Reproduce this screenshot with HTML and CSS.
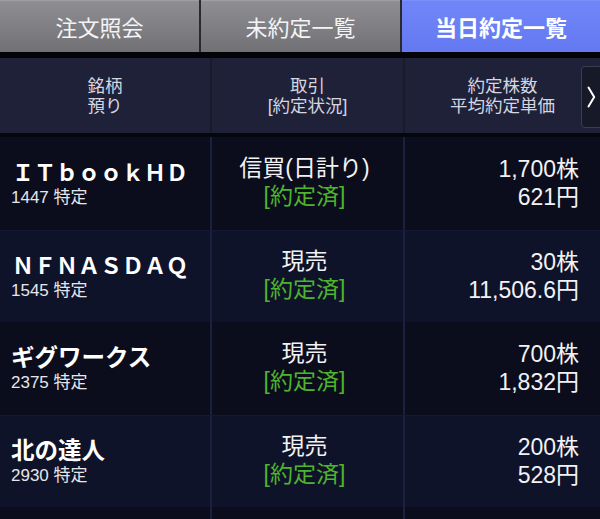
FILE: index.html
```html
<!DOCTYPE html>
<html lang="ja">
<head>
<meta charset="utf-8">
<link rel="stylesheet" href="styles.css">
</head>
<body>
<div class="screen">
  <nav class="tabs">
    <div class="tab">注文照会</div>
    <div class="tab">未約定一覧</div>
    <div class="tab active">当日約定一覧</div>
  </nav>
  <div class="thead">
    <div class="hcell c1">銘柄<br>預り</div>
    <div class="hcell c2">取引<br>[約定状況]</div>
    <div class="hcell c3">約定株数<br>平均約定単価</div>
    <div class="more"><svg width="9" height="22" viewBox="0 0 9 22"><path d="M1.5 1.5 L7.2 11 L1.5 20.5" fill="none" stroke="#fff" stroke-width="2" stroke-linecap="round" stroke-linejoin="round"/></svg></div>
  </div>
  <div class="rows">
    <div class="row">
      <div class="cell c1"><div class="name wide">ＩＴｂｏｏｋＨＤ</div><div class="code">1447 特定</div></div>
      <div class="cell c2"><div>信買(日計り)</div><div class="done">[約定済]</div></div>
      <div class="cell c3"><div>1,700株</div><div>621円</div></div>
    </div>
    <div class="row alt">
      <div class="cell c1"><div class="name wide">ＮＦＮＡＳＤＡＱ</div><div class="code">1545 特定</div></div>
      <div class="cell c2"><div>現売</div><div class="done">[約定済]</div></div>
      <div class="cell c3"><div>30株</div><div>11,506.6円</div></div>
    </div>
    <div class="row">
      <div class="cell c1"><div class="name">ギグワークス</div><div class="code">2375 特定</div></div>
      <div class="cell c2"><div>現売</div><div class="done">[約定済]</div></div>
      <div class="cell c3"><div>700株</div><div>1,832円</div></div>
    </div>
    <div class="row alt">
      <div class="cell c1"><div class="name">北の達人</div><div class="code">2930 特定</div></div>
      <div class="cell c2"><div>現売</div><div class="done">[約定済]</div></div>
      <div class="cell c3"><div>200株</div><div>528円</div></div>
    </div>
    <div class="row last">
      <div class="cell c1"></div>
      <div class="cell c2"></div>
      <div class="cell c3"></div>
    </div>
  </div>
</div>
</body>
</html>
```
FILE: styles.css
```css
* { box-sizing: border-box; }
html, body { margin: 0; padding: 0; }
body {
  background: #05060c;
  font-family: "Liberation Sans", "Noto Sans CJK JP", sans-serif;
  color: #f2f2f4;
  width: 600px;
  height: 519px;
  overflow: hidden;
}
.screen { width: 600px; height: 519px; overflow: hidden; }
.tabs {
  display: flex;
  height: 58px;
  border-bottom: 6px solid #040408;
  background: #2a2a2e;
}
.tab {
  flex: 0 0 199px;
  height: 52px;
  display: flex;
  align-items: center;
  justify-content: center;
  font-size: 22px;
  color: #f4f4f6;
  background: linear-gradient(#8f8f93, #717175);
  border-top: 1px solid #a0a0a4;
  margin-right: 2px;
  padding-bottom: 1px;
}
.tab.active {
  flex: 1 1 auto;
  margin-right: 0;
  background: linear-gradient(#7086f8, #6479f1);
  border-top-color: #7c90fa;
  color: #ffffff;
  font-weight: bold;
}
.thead {
  position: relative;
  display: flex;
  height: 79px;
  background: #1f2139;
  border-bottom: 4px solid #06070e;
}
.hcell {
  display: flex;
  align-items: center;
  justify-content: center;
  text-align: center;
  font-size: 17.5px;
  line-height: 20px;
  color: #d4d6e0;
  padding-top: 1px;
}
.c1 { flex: 0 0 212px; border-right: 2px solid #181a2e; }
.c2 { flex: 0 0 193px; border-right: 2px solid #181a2e; }
.c3 { flex: 1 1 auto; }
.more {
  position: absolute;
  right: -4px;
  top: 8px;
  width: 23px;
  height: 62px;
  background: #171929;
  border: 1px solid #3a3d52;
  border-radius: 4px;
  display: flex;
  align-items: center;
  padding-left: 5px;
}
.rows { display: flex; flex-direction: column; }
.row {
  display: flex;
  height: 92.5px;
  background: #0b0d1c;
  flex-shrink: 0;
}
.row.alt { background: #0f1329; border-top: 1px solid #141833; }
.row.last { height: 12px; }
.row .c1, .row .c2 { border-right-color: #1c2040; }
.cell {
  display: flex;
  flex-direction: column;
  justify-content: center;
  font-size: 23px;
  line-height: 28px;
}
.row .c1 { padding-left: 11px; padding-bottom: 2px; }
.row .c2 { align-items: center; padding-right: 6px; padding-bottom: 2px; }
.row .c3 { align-items: flex-end; padding-right: 21px; padding-bottom: 1px; }
.name {
  font-family: "Noto Sans CJK JP", sans-serif;
  font-weight: bold;
  font-size: 23.5px;
  line-height: 28px;
  color: #ffffff;
}
.name.wide { font-size: 22px; padding-left: 1px; }
.code {
  font-size: 17px;
  line-height: 20px;
  margin-top: 3px;
  color: #e6e6ea;
}
.done { color: #4db42c; }
```
